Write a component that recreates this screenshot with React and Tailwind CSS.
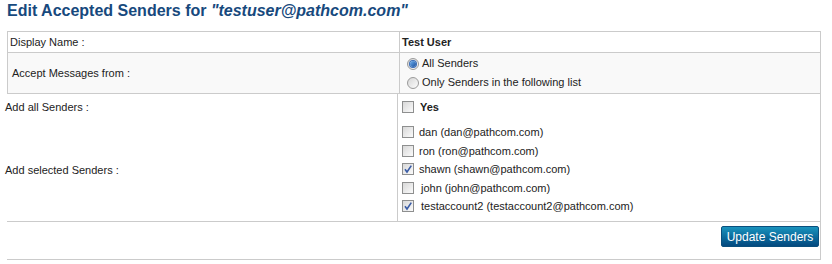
import React from 'react'

const senders = [
  { name: 'dan', email: 'dan@pathcom.com', checked: false, gap: 'ml-[5px]' },
  { name: 'ron', email: 'ron@pathcom.com', checked: false, gap: 'ml-[5px]' },
  { name: 'shawn', email: 'shawn@pathcom.com', checked: true, gap: 'ml-[5px]' },
  { name: 'john', email: 'john@pathcom.com', checked: false, gap: 'ml-[7px]' },
  { name: 'testaccount2', email: 'testaccount2@pathcom.com', checked: true, gap: 'ml-[7px]' },
]

const Checkbox = ({ checked }) => (
  <span className="relative inline-block w-[12px] h-[12px] shrink-0 border border-[#8e8f8f] bg-gradient-to-br from-[#d8d8d8] to-[#fbfbfb]">
    {checked && (
      <svg viewBox="0 0 12 12" className="absolute -left-px -top-px w-[12px] h-[12px]">
        <path d="M3 6.2 L5 9 L9.3 2.6" fill="none" stroke="#3a5ca6" strokeWidth="1.6" />
      </svg>
    )}
  </span>
)

const Radio = ({ checked }) => (
  <span className="inline-flex items-center justify-center w-[12px] h-[12px] shrink-0 rounded-full border border-[#9a9a9a] bg-gradient-to-br from-[#d6d6d6] to-[#fdfdfd]">
    {checked && (
      <span className="block w-[6px] h-[6px] rounded-full bg-gradient-to-br from-[#6fb0ef] to-[#1a4f9c] ring-1 ring-[#3a6db8]" />
    )}
  </span>
)

export default function App() {
  return (
    <div className="w-[832px] h-[264px] bg-white text-[11px] text-[#222] overflow-hidden" style={{ fontFamily: '"Liberation Sans", Arial, sans-serif' }}>
      <h1 className="pl-[7px] pt-[1px] h-[31px] leading-[20px] text-[16px] font-bold text-[#17497d]">
        Edit Accepted Senders for <i>"testuser@pathcom.com"</i>
      </h1>

      <div className="ml-[7px] w-[814px]">
        {/* Display name + accept from */}
        <div className="border border-b-0 border-[#cbcbcb]">
          <div className="flex h-[21px] border-b border-[#cbcbcb]">
            <div className="w-[392px] pl-[2px] flex items-center border-r border-[#cbcbcb]">Display Name :</div>
            <div className="flex-1 pl-[2px] flex items-center font-bold">Test User</div>
          </div>
          <div className="flex h-[41px] bg-[#f9f9f9] border-b border-[#cbcbcb]">
            <div className="w-[392px] pl-[4px] flex items-center border-r border-[#cbcbcb]">Accept Messages from :</div>
            <div className="flex-1 pl-[7px] pt-[1px]">
              <label className="flex items-center h-[19px] gap-[3px]">
                <Radio checked />
                <span>All Senders</span>
              </label>
              <label className="flex items-center h-[19px] gap-[3px]">
                <Radio />
                <span>Only Senders in the following list</span>
              </label>
            </div>
          </div>
        </div>

        {/* Senders */}
        <div className="border-r border-b border-[#cbcbcb]">
          <div className="flex h-[26px]">
            <div className="w-[393px] -ml-[2px] pt-[5px] border-r border-[#cbcbcb]">Add all Senders :</div>
            <div className="flex-1 pl-[4px] pt-[4px]">
              <label className="flex items-center h-[18px]">
                <Checkbox />
                <span className="ml-[6px] font-bold">Yes</span>
              </label>
            </div>
          </div>
          <div className="flex h-[101px]">
            <div className="w-[393px] -ml-[2px] flex items-center border-r border-[#cbcbcb]">Add selected Senders :</div>
            <div className="flex-1 pl-[4px] pt-[3px]">
              {senders.map((s) => (
                <label key={s.name} className="flex items-center h-[18.5px]">
                  <Checkbox checked={s.checked} />
                  <span className={s.gap}>{s.name} ({s.email})</span>
                </label>
              ))}
            </div>
          </div>
        </div>

        {/* Submit */}
        <div className="flex justify-end h-[38px] pt-[4px] pr-[1px] border-r border-b border-[#cbcbcb]">
          <button className="h-[21px] w-[98px] rounded-[2px] border border-[#0a4f7d] bg-gradient-to-b from-[#1a93bd] to-[#04497f] text-white text-[12px] leading-none">
            Update Senders
          </button>
        </div>
      </div>
    </div>
  )
}
